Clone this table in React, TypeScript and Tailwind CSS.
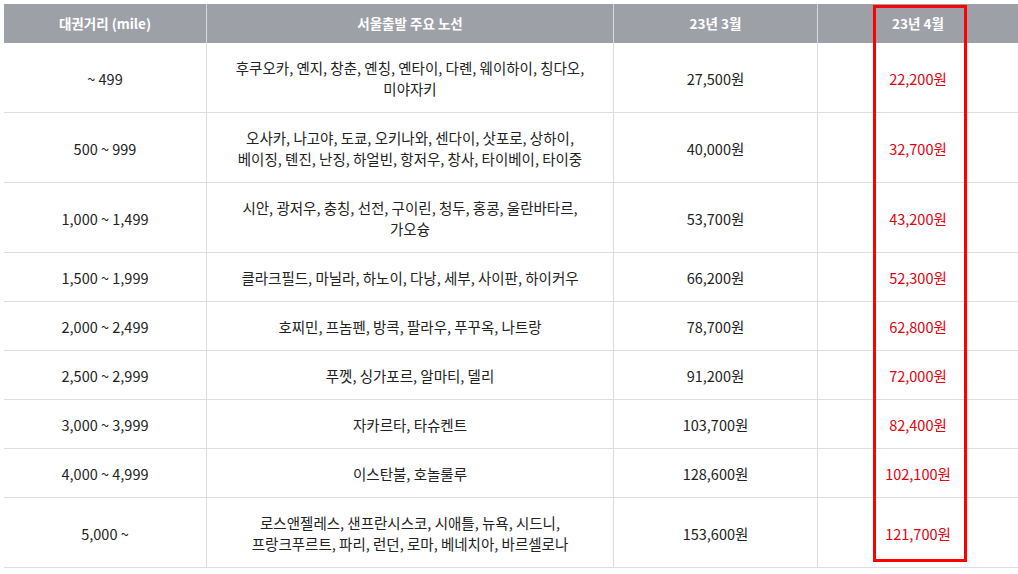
import React from "react";

const rows: { dist: string; routes: string[]; mar: string; apr: string }[] = [
  { dist: "~ 499", routes: ["후쿠오카, 옌지, 창춘, 옌칭, 옌타이, 다롄, 웨이하이, 칭다오,", "미야자키"], mar: "27,500원", apr: "22,200원" },
  { dist: "500 ~ 999", routes: ["오사카, 나고야, 도쿄, 오키나와, 센다이, 삿포로, 상하이,", "베이징, 톈진, 난징, 하얼빈, 항저우, 창사, 타이베이, 타이중"], mar: "40,000원", apr: "32,700원" },
  { dist: "1,000 ~ 1,499", routes: ["시안, 광저우, 충칭, 선전, 구이린, 청두, 홍콩, 울란바타르,", "가오슝"], mar: "53,700원", apr: "43,200원" },
  { dist: "1,500 ~ 1,999", routes: ["클라크필드, 마닐라, 하노이, 다낭, 세부, 사이판, 하이커우"], mar: "66,200원", apr: "52,300원" },
  { dist: "2,000 ~ 2,499", routes: ["호찌민, 프놈펜, 방콕, 팔라우, 푸꾸옥, 나트랑"], mar: "78,700원", apr: "62,800원" },
  { dist: "2,500 ~ 2,999", routes: ["푸껫, 싱가포르, 알마티, 델리"], mar: "91,200원", apr: "72,000원" },
  { dist: "3,000 ~ 3,999", routes: ["자카르타, 타슈켄트"], mar: "103,700원", apr: "82,400원" },
  { dist: "4,000 ~ 4,999", routes: ["이스탄불, 호놀룰루"], mar: "128,600원", apr: "102,100원" },
  { dist: "5,000 ~", routes: ["로스앤젤레스, 샌프란시스코, 시애틀, 뉴욕, 시드니,", "프랑크푸르트, 파리, 런던, 로마, 베네치아, 바르셀로나"], mar: "153,600원", apr: "121,700원" },
];

const cell = "flex flex-col items-center justify-center text-center pt-[14px] pb-[13px] border-b border-[#dddddd]";
const head = "h-[39px] bg-[#9ea0a7] text-white font-bold text-[13.5px] flex items-center justify-center";

export default function App() {
  return (
    <div
      className="w-[1018px] h-[574px] bg-white overflow-hidden pt-[4px] pl-[4px] relative"
      style={{ fontFamily: '"Noto Sans CJK KR", "Noto Sans", sans-serif' }}
    >
      <div className="grid grid-cols-[203px_407px_204px_200px] text-[14.5px] leading-[21px] text-[#222222]">
        <div className={`${head} border-r border-[#d9dadd]`}>대권거리 (mile)</div>
        <div className={`${head} border-r border-[#d9dadd]`}>서울출발 주요 노선</div>
        <div className={`${head} border-r border-[#d9dadd]`}>23년 3월</div>
        <div className={head}>23년 4월</div>
        {rows.map((r) => (
          <React.Fragment key={r.dist}>
            <div className={`${cell} border-r`}>{r.dist}</div>
            <div className={`${cell} border-r`}>
              {r.routes.map((l) => (
                <span key={l}>{l}</span>
              ))}
            </div>
            <div className={`${cell} border-r`}>{r.mar}</div>
            <div className={`${cell} text-[#e2000f]`}>{r.apr}</div>
          </React.Fragment>
        ))}
      </div>
      <div className="absolute left-[873px] top-[5px] w-[94px] h-[557px] border-[3px] border-[#ff0000]" />
    </div>
  );
}
